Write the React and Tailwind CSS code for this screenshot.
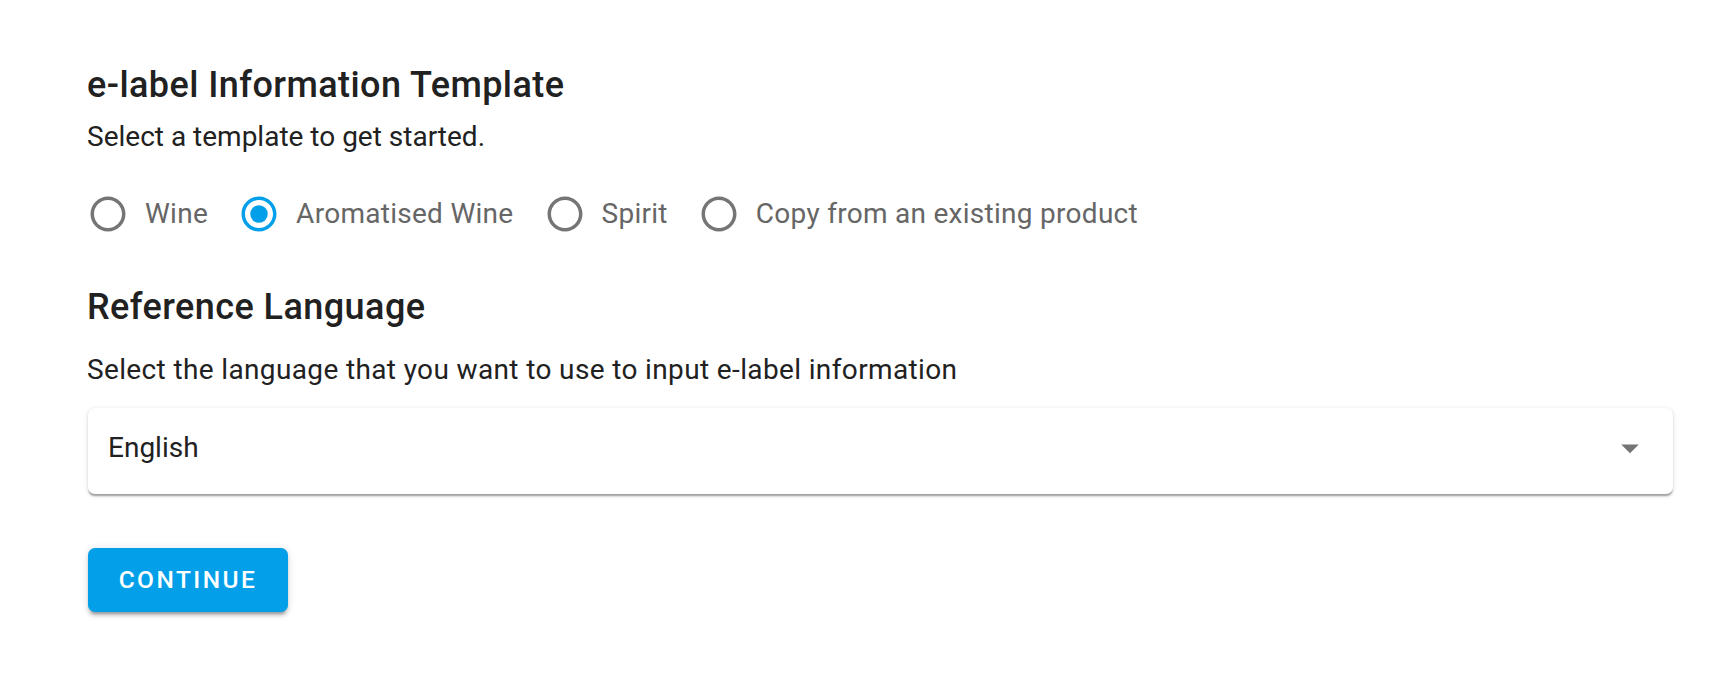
import React from "react";

function RadioIcon({ checked }) {
  const color = checked ? "#03a0e9" : "#757575";
  return (
    <svg viewBox="0 0 24 24" className="w-[42px] h-[42px] shrink-0" fill={color}>
      <path d="M12 2C6.48 2 2 6.48 2 12s4.48 10 10 10 10-4.48 10-10S17.52 2 12 2zm0 18c-4.42 0-8-3.58-8-8s3.58-8 8-8 8 3.58 8 8-3.58 8-8 8z" />
      {checked && <circle cx="12" cy="12" r="5" />}
    </svg>
  );
}

function Option({ label, checked }) {
  return (
    <label className="flex items-center cursor-pointer">
      <RadioIcon checked={checked} />
      <span className="ml-[16px] text-[28px] leading-[42px] text-[#666666] tracking-[0.01em]">{label}</span>
    </label>
  );
}

export default function App() {
  return (
    <div className="min-h-[696px] w-full bg-white font-[family-name:Roboto,sans-serif] pl-[87px] pt-[57px]">
      <h1 className="text-[36px] leading-[56px] font-medium text-[#212121] tracking-[0.012em]">
        e-label Information Template
      </h1>
      <p className="mt-[3px] text-[28px] leading-[42px] text-[#212121]">
        Select a template to get started.
      </p>
      <div className="mt-[35px] flex items-center gap-[30px] h-[42px]">
        <Option label="Wine" />
        <Option label="Aromatised Wine" checked />
        <Option label="Spirit" />
        <Option label="Copy from an existing product" />
      </div>
      <h2 className="mt-[44px] text-[36px] leading-[56px] font-medium text-[#212121] tracking-[0.012em]">
        Reference Language
      </h2>
      <p className="mt-[14px] text-[28px] leading-[42px] text-[#212121] tracking-[0.013em]">
        Select the language that you want to use to input e-label information
      </p>
      <div className="mt-[17px] ml-[1px] w-[1585px] h-[86px] rounded-[7px] bg-white shadow-[0_3.5px_1.75px_-1.75px_rgba(0,0,0,0.2),0_1.75px_1.75px_0_rgba(0,0,0,0.14),0_1.75px_5.25px_0_rgba(0,0,0,0.12)] flex items-center pb-[6px] pl-[20px] pr-[22px]">
        <span className="flex-1 text-[28px] leading-[42px] text-[#212121]">English</span>
        <svg viewBox="0 0 24 24" className="w-[42px] h-[42px]" fill="#757575">
          <path d="M7 10l5 5 5-5z" />
        </svg>
      </div>
      <button className="mt-[54px] ml-[1px] w-[200px] h-[64px] rounded-[7px] bg-[#03a0e9] text-white text-[24.5px] font-medium uppercase tracking-[0.1em] flex items-center justify-center shadow-[0_5px_1.75px_-3.5px_rgba(0,0,0,0.2),0_3.5px_3.5px_0_rgba(0,0,0,0.14),0_1.75px_8.75px_0_rgba(0,0,0,0.12)]">
        Continue
      </button>
    </div>
  );
}
